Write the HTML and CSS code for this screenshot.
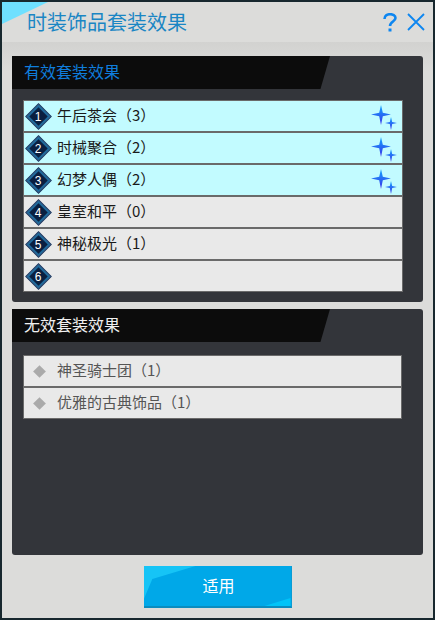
FILE: index.html
```html
<!DOCTYPE html>
<html lang="zh-CN">

<head>
    <meta charset="UTF-8">
    <meta name="viewport" content="width=device-width, initial-scale=1.0">
    <title>时装饰品套装效果</title>
    <link rel="stylesheet" href="styles.css">
</head>

<body>
    <svg width="0" height="0" class="defs">
        <defs>
            <linearGradient id="star" x1="0" y1="0" x2="0" y2="1">
                <stop offset="0" stop-color="#12a8ff"/>
                <stop offset="1" stop-color="#3a2fe8"/>
            </linearGradient>
            <symbol id="stars" viewBox="0 0 26 26">
                <path fill="url(#star)" d="M10 0 L11.8 7.7 L20 9.5 L11.8 11.3 L10 20 L8.2 11.3 L0 9.5 L8.2 7.7 Z"/>
                <path fill="url(#star)" d="M20 12 L21.2 17 L26 18 L21.2 19 L20 25 L18.8 19 L14 18 L18.8 17 Z"/>
            </symbol>
        </defs>
    </svg>
    <div id="win">
        <div class="corner"></div>
        <div class="titlebar">
            <h1>时装饰品套装效果</h1>
            <svg class="ico-help" width="14" height="19" viewBox="0 0 14 19">
                <path d="M1.5 6 C1.5 -0.5 12.5 0 12.5 5 C12.5 8.5 7 8.5 7 13" fill="none" stroke="#0d86f0" stroke-width="2.6"/>
                <rect x="5.5" y="15.5" width="3" height="3" fill="#0d86f0"/>
            </svg>
            <svg class="ico-close" width="18" height="18" viewBox="0 0 18 18">
                <path d="M1 1 L17 17 M17 1 L1 17" stroke="#0d86f0" stroke-width="1.8" fill="none"/>
            </svg>
        </div>
        <div class="content">
            <div class="panel panel-on">
                <div class="panel-head"><span class="on-title">有效套装效果</span></div>
                <div class="rows">
                    <div class="row active"><span class="dia"><b>1</b></span><span class="name">午后茶会（3）</span><svg class="stars"><use href="#stars"/></svg></div>
                    <div class="row active"><span class="dia"><b>2</b></span><span class="name">时械聚合（2）</span><svg class="stars"><use href="#stars"/></svg></div>
                    <div class="row active"><span class="dia"><b>3</b></span><span class="name">幻梦人偶（2）</span><svg class="stars"><use href="#stars"/></svg></div>
                    <div class="row"><span class="dia"><b>4</b></span><span class="name">皇室和平（0）</span></div>
                    <div class="row"><span class="dia"><b>5</b></span><span class="name">神秘极光（1）</span></div>
                    <div class="row"><span class="dia"><b>6</b></span><span class="name"></span></div>
                </div>
            </div>
            <div class="panel panel-off">
                <div class="panel-head"><span>无效套装效果</span></div>
                <div class="rows off">
                    <div class="row"><span class="small-dia"></span><span class="name">神圣骑士团（1）</span></div>
                    <div class="row"><span class="small-dia"></span><span class="name">优雅的古典饰品（1）</span></div>
                </div>
            </div>
        </div>
        <div class="foot">
            <button id="apply">适用</button>
        </div>
    </div>
</body>

</html>
```

FILE: styles.css
```css
* {
    box-sizing: border-box;
    margin: 0;
    padding: 0;
}

html, body {
    width: 435px;
    height: 620px;
    overflow: hidden;
    background: #18282e;
}

body {
    padding: 2px;
    font-family: "Noto Sans CJK SC", "Liberation Sans", sans-serif;
}

.defs {
    position: absolute;
}

#win {
    position: relative;
    width: 431px;
    height: 616px;
    background: #dcdcda;
    display: flex;
    flex-direction: column;
    overflow: hidden;
}

.corner {
    position: absolute;
    left: 0;
    top: 0;
    width: 46px;
    height: 22px;
    background: #6fe0ff;
    clip-path: polygon(0 0, 100% 0, 0 100%);
}

.titlebar {
    position: relative;
    height: 40px;
    display: flex;
    align-items: center;
    padding-left: 25px;
}

.titlebar h1 {
    flex: 1;
    font-size: 20px;
    font-weight: 400;
    color: #1a86c4;
    padding-bottom: 2px;
}

.ico-help {
    margin-right: 10px;
}

.ico-close {
    margin-right: 8px;
}

.content {
    height: 513px;
    padding: 14px 10px 0;
    background: linear-gradient(#d2d2d0, #dcdcda 30px);
    display: flex;
    flex-direction: column;
    gap: 7px;
}

.panel {
    height: 246px;
    background: #33353a;
    border-radius: 3px;
}

.panel-head {
    height: 33px;
    width: 318px;
    background: #0c0c0c;
    clip-path: polygon(0 0, 100% 0, 97% 100%, 0 100%);
    display: flex;
    align-items: center;
    padding-left: 12px;
    padding-bottom: 3px;
    font-size: 16px;
    color: #f0f0f0;
}

.on-title {
    color: #0f7ddc;
}

.rows {
    margin: 11px 20px 0 11px;
    background: #6a6a6a;
    border: 1px solid #6a6a6a;
    display: flex;
    flex-direction: column;
    gap: 2px;
}

.rows.off {
    margin: 13px 21px 0 11px;
}

.row {
    height: 30px;
    background: #e9e9e9;
    display: flex;
    align-items: center;
    position: relative;
    font-size: 15px;
    color: #1a1a1a;
}

.row.active {
    background: #c2fbff;
}

.off .row {
    color: #555;
}

.dia {
    width: 17px;
    height: 17px;
    margin-left: 6px;
    margin-right: 10px;
    transform: rotate(45deg);
    background: #0a1f40;
    border: 2px solid #1f6a9c;
    outline: 1px solid #17345f;
    display: flex;
    align-items: center;
    justify-content: center;
    flex: none;
}

.dia b {
    transform: rotate(-45deg);
    font-family: "Liberation Sans", sans-serif;
    font-size: 12px;
    font-weight: 400;
    color: #fff;
}

.name {
    padding-bottom: 4px;
}

.small-dia {
    width: 9px;
    height: 9px;
    margin-left: 11px;
    margin-right: 13px;
    transform: rotate(45deg);
    background: #aaa;
    flex: none;
}

.stars {
    position: absolute;
    right: 5px;
    top: 4px;
    width: 26px;
    height: 26px;
}

.foot {
    flex: 1;
    display: flex;
    justify-content: center;
    padding-top: 11px;
}

#apply {
    position: relative;
    width: 148px;
    height: 42px;
    border: none;
    border-bottom: 2px solid #0a8cbf;
    border-right: 1px solid #0a9cd4;
    padding: 0 0 2px 3px;
    color: #fff;
    font-family: inherit;
    font-size: 16px;
    background: #00a8e8;
    overflow: hidden;
}

#apply::before {
    content: "";
    position: absolute;
    left: 0;
    top: 0;
    width: 52px;
    height: 34px;
    background: #16c4f6;
    clip-path: polygon(0 0, 100% 0, 17% 38%, 0 100%);
}

#apply::after {
    content: "";
    position: absolute;
    right: 0;
    bottom: 0;
    width: 26px;
    height: 8px;
    background: #00c4f8;
    clip-path: polygon(100% 0, 100% 100%, 0 100%);
}
```
